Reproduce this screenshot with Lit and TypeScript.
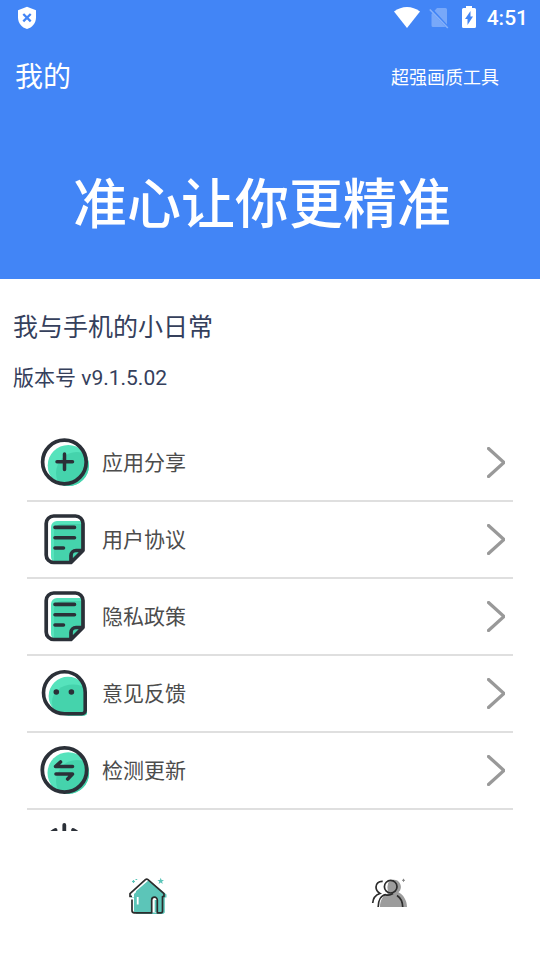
import { LitElement, html, css, svg, type SVGTemplateResult } from "lit";
import { customElement, property } from "lit/decorators.js";

const DARK = "#2b3038";
const LIGHT_GREEN = "#56e3bc";
const GREEN = "#45d3ac";

const documentIcon = svg`
  <path d="M11 13a6 6 0 0 1 6-6H41a3 3 0 0 1 3 3V36L31 49H17a6 6 0 0 1-6-6Z" fill=${LIGHT_GREEN}/>
  <path d="M14 49V18a8 8 0 0 1 8-8H44V36L31 49Z" fill=${GREEN}/>
  <path d="M43 36V9.5a7.5 7.5 0 0 0-7.5-7.5H13.7a7.5 7.5 0 0 0-7.5 7.5V41a7.5 7.5 0 0 0 7.5 7.500H31L43 36.500H36a5 5 0 0 0-5 5V48" fill="none" stroke=${DARK} stroke-width="3.7" stroke-linejoin="round"/>
  <path d="M15 13.4H34.5M15 23.7H34.5M15 34H23.5" stroke=${DARK} stroke-width="3.6" stroke-linecap="round"/>`;

const icons: Record<string, SVGTemplateResult> = {
  share: svg`
    <clipPath id="disc"><circle cx="28.3" cy="28.5" r="20.6"/></clipPath>
    <circle cx="28.3" cy="28.5" r="20.6" fill=${LIGHT_GREEN}/>
    <circle cx="37" cy="36" r="21" fill=${GREEN} clip-path="url(#disc)"/>
    <circle cx="24.4" cy="25" r="21.8" fill="none" stroke=${DARK} stroke-width="3.7"/>
    <path d="M17 24.8H32.5M24.5 17V32.500" stroke=${DARK} stroke-width="3.5" stroke-linecap="round"/>`,
  document: documentIcon,
  feedback: svg`
    <clipPath id="drop"><path d="M28 8.7A19 19 0 0 1 47 27V44a3.5 3.5 0 0 1-3.5 3.5H28A19.4 19.4 0 0 1 28 8.7Z"/></clipPath>
    <g clip-path="url(#drop)">
      <rect width="51" height="51" fill=${LIGHT_GREEN}/>
      <ellipse cx="33" cy="34" rx="21" ry="17.5" fill=${GREEN}/>
      <rect x="28" y="30" width="22" height="20" fill=${GREEN}/>
    </g>
    <path d="M24.5 3.8A20.7 20.7 0 0 1 45.2 24.5V42.5a3.3 3.3 0 0 1-3.3 3.3H24.5A21 21 0 0 1 24.5 3.8Z" fill="none" stroke=${DARK} stroke-width="3.6"/>
    <circle cx="16.3" cy="24" r="2.8" fill=${DARK}/><circle cx="31.4" cy="24" r="2.8" fill=${DARK}/>`,
  update: svg`
    <clipPath id="disc"><circle cx="28.3" cy="28" r="20.8"/></clipPath>
    <circle cx="28.3" cy="28" r="20.8" fill=${LIGHT_GREEN}/>
    <circle cx="37" cy="36" r="21" fill=${GREEN} clip-path="url(#disc)"/>
    <circle cx="24.5" cy="25" r="22.2" fill="none" stroke=${DARK} stroke-width="3.8"/>
    <path d="M32.5 21.500H15.500L20.500 17M16 29H32.500L27.700 34" fill="none" stroke=${DARK} stroke-width="3.6" stroke-linecap="round" stroke-linejoin="round"/>`,
  power: svg`
    <path d="M15.5 8A20 20 0 1 0 33.1 8M24.3 3V22" fill="none" stroke=${DARK} stroke-width="3.8" stroke-linecap="round"/>`,
};

const arrow = svg`<path d="M1.5 1.5L17 15.500L1.500 29.500" fill="none" stroke="#999" stroke-width="3.3" stroke-linecap="round"/>`;

@customElement("status-bar")
export class StatusBar extends LitElement {
  static styles = css`
    :host {
      display: flex;
      align-items: center;
      justify-content: space-between;
      height: 36px;
      padding: 0 12px 0 17px;
      color: #fff;
      font: 500 21px/36px Roboto, sans-serif;
    }
    .right {
      display: flex;
      align-items: center;
    }
    .wifi { margin-right: 9px; }
    .sim { margin-right: 13px; }
    .battery { margin-right: 11px; }
  `;

  render() {
    return html`
      <svg width="20" height="24" viewBox="0 0 20 24" aria-hidden="true">
        <path d="M10 .8L19 4.200V11.500C19 17 15.200 21.600 10 23C4.800 21.600 1 17 1 11.500V4.200Z" fill="#fff"/>
        <path d="M6.3 8L13.700 15.400M13.700 8L6.300 15.400" stroke="#4285f6" stroke-width="2.3"/>
      </svg>
      <div class="right">
        <svg class="wifi" width="26" height="22" viewBox="0 0 26 22" aria-hidden="true">
          <path d="M0 4.5Q6 0 13 0T26 4.500L13 21Z" fill="#fff"/>
        </svg>
        <svg class="sim" width="20" height="22" viewBox="0 0 20 22" aria-hidden="true">
          <path d="M8 1H16.5a1.5 1.5 0 0 1 1.5 1.500V17.500L5.500 3.800ZM3.500 6L16.500 20H4a1.500 1.500 0 0 1-1.500-1.500V7Z" fill="#78a8f9"/>
          <path d="M.8 2.5L18.800 21" stroke="#86b1fa" stroke-width="1.6"/>
        </svg>
        <svg class="battery" width="14" height="24" viewBox="0 0 14 24" aria-hidden="true">
          <path d="M4 0H10V2H12.5A1.5 1.5 0 0 1 14 3.500V20.500A1.500 1.500 0 0 1 12.500 22H1.500A1.500 1.500 0 0 1 0 20.500V3.500A1.500 1.500 0 0 1 1.500 2H4Z" fill="#fff"/>
          <path d="M8.5 5V10.500H11L5.500 19V13H3Z" fill="#4285f6"/>
        </svg>
        <span>4:51</span>
      </div>
    `;
  }
}

@customElement("menu-row")
export class MenuRow extends LitElement {
  @property() icon = "share";
  @property() label = "";

  static styles = css`
    :host {
      display: block;
      border-bottom: 2px solid #dfdfdf;
    }
    .row {
      display: flex;
      align-items: center;
      gap: 12px;
      box-sizing: border-box;
      width: 100%;
      height: 75px;
      margin: 0;
      padding: 0 8px 0 13px;
      border: 0;
      background: none;
      color: #4c4c4c;
      font: 21px/32px Roboto, "Noto Sans CJK SC", sans-serif;
      text-align: left;
    }
    .label { flex: 1; }
    .icon, .arrow { flex: none; }
  `;

  render() {
    return html`
      <button class="row" type="button">
        <svg class="icon" width="50" height="51" viewBox="0 0 50 51" aria-hidden="true">${icons[this.icon]}</svg>
        <span class="label">${this.label}</span>
        <svg class="arrow" width="18" height="31" viewBox="0 0 18 31" aria-hidden="true">${arrow}</svg>
      </button>
    `;
  }
}

@customElement("app-root")
export class AppRoot extends LitElement {
  private rows = [
    { icon: "share", label: "应用分享" },
    { icon: "document", label: "用户协议" },
    { icon: "document", label: "隐私政策" },
    { icon: "feedback", label: "意见反馈" },
    { icon: "update", label: "检测更新" },
    { icon: "power", label: "" },
  ];

  static styles = css`
    :host {
      display: flex;
      flex-direction: column;
      height: 100vh;
      background: #fff;
      font-family: Roboto, "Noto Sans CJK SC", sans-serif;
    }
    .header {
      background: #4285f6;
      color: #fff;
    }
    .bar {
      display: flex;
      align-items: center;
      justify-content: space-between;
      height: 84px;
      padding: 0 41px 0 15px;
    }
    .page {
      margin: 0;
      font-size: 28px;
      font-weight: 400;
      line-height: 40px;
    }
    .tool {
      font-size: 18px;
      line-height: 28px;
    }
    .slogan {
      margin: 0;
      padding: 48px 16px 35px 0;
      font-size: 54px;
      font-weight: 500;
      line-height: 76px;
      text-align: center;
    }
    .info {
      display: flex;
      flex-direction: column;
      gap: 16px;
      padding: 30px 13px 32px;
      color: #35405c;
    }
    .title {
      margin: 0;
      font-size: 25px;
      font-weight: 400;
      line-height: 38px;
    }
    .version {
      margin: 0;
      font-size: 21px;
      line-height: 30px;
    }
    .list {
      flex: 1 1 0;
      min-height: 0;
      margin: 0 27px;
      overflow-y: auto;
      scrollbar-width: none;
    }
    .tabs {
      display: flex;
      padding: 0 27px;
    }
    .tab {
      display: flex;
      flex: 1;
      align-items: center;
      justify-content: center;
      height: 129px;
      padding: 0;
      border: 0;
      background: none;
    }
  `;

  render() {
    return html`
      <header class="header">
        <status-bar></status-bar>
        <div class="bar">
          <h1 class="page">我的</h1>
          <span class="tool">超强画质工具</span>
        </div>
        <p class="slogan">准心让你更精准</p>
      </header>
      <section class="info">
        <h2 class="title">我与手机的小日常</h2>
        <p class="version">版本号 v9.1.5.02</p>
      </section>
      <main class="list">
        ${this.rows.map((r) => html`<menu-row .icon=${r.icon} .label=${r.label}></menu-row>`)}
      </main>
      <nav class="tabs">
        <button class="tab" type="button" aria-label="首页">
          <svg width="41" height="41" viewBox="0 0 41 41" aria-hidden="true">
            <path d="M21 5L38.500 19.500V22.500H36.800V37.500L35 39H8.500L6 36.500V22.500H3.500V20Z" fill="#5cc5b8"/>
            <path d="M18.7 4L4 17L4 22H8V14.500L20 5Z" fill="#fff"/>
            <path d="M20 6.5L6 19V37H33V18Z" fill="#5cc5b8"/>
            <path d="M23.7 37.5V25a2.8 2.8 0 0 1 5.600 0V37.500Z" fill="#fff"/>
            <path d="M26.7 37V25h2.500V37Z" fill="#5cc5b8"/>
            <path d="M4 24.5V35.5a2.3 2.3 0 0 0 2.300 2.300H23.700V25a2.800 2.800 0 0 1 5.600 0V37.800H33a1.500 1.500 0 0 0 1.500-1.500V21.500H36V18.700L20 4.600Q18.700 3.500 17.400 4.600L2 18.700V21.500H4" fill="none" stroke="#2c2c2c" stroke-width="1.7" stroke-linejoin="round"/>
            <path d="M9.7 22V29.500" stroke="#fff" stroke-width="1.8"/>
            <path d="M32.7 2.8L33.600 5H36L34.100 6.500L34.800 9L32.700 7.600L30.600 9L31.300 6.500L29.400 5H31.800Z" fill="#5cc5b8"/>
            <path d="M4 6.5H7M5.500 5V8M7.500 4.500H9.200" stroke="#5cc5b8" stroke-width="1.2"/>
          </svg>
        </button>
        <button class="tab" type="button" aria-label="我的">
          <svg width="41" height="41" viewBox="0 0 41 41" aria-hidden="true">
            <path d="M22 4.7a7.2 7.2 0 0 1 5.500 12.500C32 19.500 36 25 36 32H9C9 25 12 20.500 17 18.500C13.500 15 13 8 22 4.700Z" fill="#9c9c9c"/>
            <path d="M17.5 6.5Q13.600 8.500 13.800 12T17 17.500Q15.500 12 17.500 6.500Z" fill="#fff"/>
            <circle cx="19.7" cy="11.7" r="6.3" fill="none" stroke="#2c2c2c" stroke-width="1.7"/>
            <path d="M7.2 32C7.200 25.500 10 20.500 14.500 19.700Q18 21 22 18.500M26 20.500Q31.500 24 31.700 32M11.700 6.300C7.500 6 5 8.800 5 12C5 14.700 6.500 17 9 18.500C4.500 20 2 23.500 1.700 28" fill="none" stroke="#2c2c2c" stroke-width="1.7"/>
            <path d="M31 5.3H34M32.500 3.800V6.800" stroke="#888" stroke-width="1"/>
          </svg>
        </button>
      </nav>
    `;
  }
}
